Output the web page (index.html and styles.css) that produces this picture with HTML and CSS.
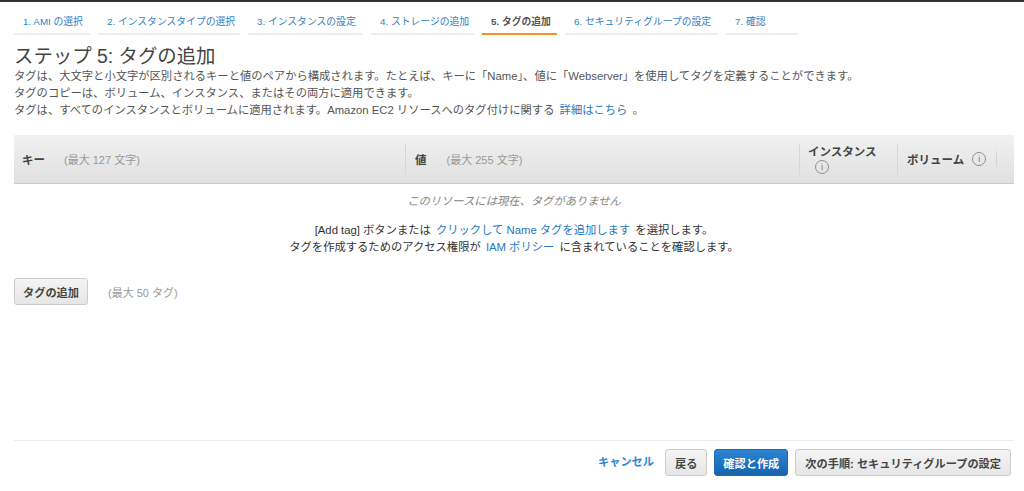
FILE: index.html
```html
<!DOCTYPE html>
<html lang="ja">
<head>
    <meta charset="UTF-8">
    <title>ステップ 5: タグの追加</title>
    <link rel="stylesheet" href="styles.css">
</head>
<body>
    <div class="top-line"></div>
    <div class="page">
        <!-- ウィザードのタブ -->
        <div class="tabs">
            <a class="tab tab-1">1. AMI の選択</a>
            <a class="tab tab-2">2. インスタンスタイプの選択</a>
            <a class="tab tab-3">3. インスタンスの設定</a>
            <a class="tab tab-4">4. ストレージの追加</a>
            <a class="tab tab-5 active">5. タグの追加</a>
            <a class="tab tab-6">6. セキュリティグループの設定</a>
            <a class="tab tab-7">7. 確認</a>
        </div>

        <h1>ステップ 5: タグの追加</h1>
        <div class="intro">
            <p>タグは、大文字と小文字が区別されるキーと値のペアから構成されます。たとえば、キーに「Name」、値に「Webserver」を使用してタグを定義することができます。</p>
            <p>タグのコピーは、ボリューム、インスタンス、またはその両方に適用できます。</p>
            <p>タグは、すべてのインスタンスとボリュームに適用されます。Amazon EC2 リソースへのタグ付けに関する <a class="link">詳細はこちら</a> 。</p>
        </div>

        <!-- タグのテーブル -->
        <div class="table-head">
            <div class="col col-key"><b>キー</b><span class="hint">(最大 127 文字)</span></div>
            <div class="col col-value"><b>値</b><span class="hint">(最大 255 文字)</span></div>
            <div class="col col-inst"><b>インスタンス</b><span class="info info-inst">i</span></div>
            <div class="col col-vol"><b>ボリューム</b><span class="info">i</span></div>
            <div class="col-end"></div>
        </div>
        <div class="empty">
            <p class="empty-title">このリソースには現在、タグがありません</p>
            <p>[Add tag] ボタンまたは <a class="link">クリックして Name タグを追加します</a> を選択します。</p>
            <p>タグを作成するためのアクセス権限が <a class="link">IAM ポリシー</a> に含まれていることを確認します。</p>
        </div>

        <div class="add-row">
            <button class="btn">タグの追加</button>
            <span class="hint">(最大 50 タグ)</span>
        </div>

        <!-- 下のボタン -->
        <div class="footer">
            <a class="link cancel">キャンセル</a>
            <button class="btn">戻る</button>
            <button class="btn btn-primary">確認と作成</button>
            <button class="btn">次の手順: セキュリティグループの設定</button>
        </div>
    </div>
</body>
</html>
```

FILE: styles.css
```css
/* 全体 */
html, body {
    height: 100%;
}

body {
    margin: 0;
    background: #fff;
    color: #555;
    font-family: "Liberation Sans", "Noto Sans CJK JP", sans-serif;
    font-size: 11px;
    display: flex;
    flex-direction: column;
    overflow: hidden;
}

p {
    margin: 0;
}

.top-line {
    height: 2px;
    background: #333;
}

.page {
    flex: 1;
    display: flex;
    flex-direction: column;
    padding: 0 10px 0 14px;
}

.link {
    color: #1f78c1;
    margin: 0 2px;
}

/* タブ */
.tabs {
    display: flex;
    gap: 8px;
    height: 33px;
}

.tab {
    box-sizing: border-box;
    height: 33px;
    padding: 12px 0 0 9px;
    border-bottom: 2px solid #eee;
    color: #2f82c4;
    font-size: 9.8px;
    white-space: nowrap;
}

.tab-1 { width: 76px; }
.tab-2 { width: 142px; }
.tab-3 { width: 115px; }
.tab-4 { width: 103px; }
.tab-5 { width: 75px; }
.tab-6 { width: 153px; }
.tab-7 { width: 72px; }

.tab.active {
    color: #555;
    font-weight: bold;
    border-bottom-color: #f29423;
}

/* 見出し */
h1 {
    margin: 10px 0 0;
    color: #444;
    font-size: 19.4px;
    font-weight: normal;
    line-height: 23px;
}

.intro {
    font-size: 11.3px;
    line-height: 17px;
}

/* テーブル */
.table-head {
    height: 48px;
    margin-top: 16px;
    display: flex;
    align-items: center;
    background: linear-gradient(#f1f1f1, #e0e0e0);
    border-bottom: 1px solid #ccc;
}

.table-head b {
    color: #444;
    font-size: 11.5px;
}

.col {
    box-sizing: border-box;
    height: 31px;
    display: flex;
    align-items: center;
    border-left: 1px solid #d6d6d6;
}

.col-key {
    width: 391px;
    padding-left: 8px;
    border-left: none;
}

.col-value {
    width: 394px;
    padding-left: 9px;
}

.col-inst {
    width: 98px;
    padding-left: 8px;
    flex-wrap: wrap;
    align-content: center;
    line-height: 15px;
}

.col-inst b {
    flex-basis: 100%;
}

.col-vol {
    width: 99px;
    padding-left: 9px;
}

.col-end {
    height: 16px;
    border-left: 1px solid #d6d6d6;
}

.hint {
    margin-left: 19px;
    color: #999;
    font-size: 11px;
}

.col-value .hint {
    margin-left: 20px;
}

.info {
    box-sizing: border-box;
    width: 14px;
    height: 14px;
    margin-left: 8px;
    border: 1px solid #8f8f8f;
    border-radius: 50%;
    color: #777;
    font-size: 9px;
    line-height: 12px;
    text-align: center;
}

.info-inst {
    margin-left: 7px;
}

/* タグなしの表示 */
.empty {
    padding-top: 9px;
    color: #333;
    font-size: 11.3px;
    line-height: 17px;
    text-align: center;
}

.empty-title {
    margin-bottom: 12px;
    color: #888;
    font-style: italic;
}

/* ボタン */
.btn {
    box-sizing: border-box;
    height: 27px;
    padding: 0 9px;
    background: linear-gradient(#f4f4f4, #e6e6e6);
    border: 1px solid #ccc;
    border-radius: 3px;
    color: #444;
    font-family: inherit;
    font-size: 11.2px;
    font-weight: bold;
    white-space: nowrap;
}

.btn-primary {
    padding: 0 8px;
    background: linear-gradient(#2a84d2, #1764b0);
    border-color: #1a6ab8;
    color: #fff;
}

.add-row {
    display: flex;
    align-items: center;
    margin-top: 22px;
}

.add-row .btn {
    width: 74px;
    padding: 0;
}

.add-row .hint {
    margin-left: 20px;
}

/* フッター */
.footer {
    margin-top: auto;
    margin-bottom: 15px;
    height: 35px;
    padding-right: 3px;
    display: flex;
    align-items: flex-end;
    justify-content: flex-end;
    gap: 7px;
    border-top: 1px solid #eee;
}

.cancel {
    align-self: flex-end;
    margin: 0 4px 0 0;
    color: #2b86d6;
    font-size: 11.2px;
    font-weight: bold;
    line-height: 27px;
}
```
